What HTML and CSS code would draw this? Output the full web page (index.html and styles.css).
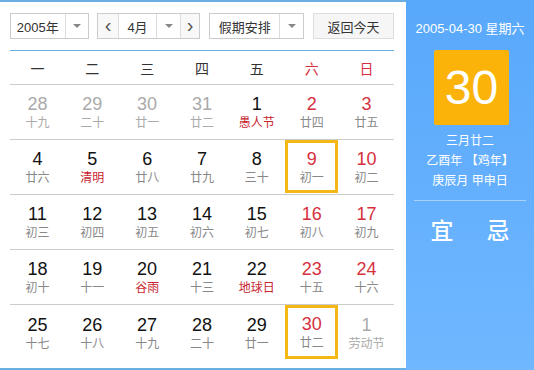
FILE: index.html
```html
<!DOCTYPE html>
<html lang="zh">
<head>
    <meta charset="UTF-8">
    <title>万年历</title>
    <link rel="stylesheet" href="styles.css">
</head>
<body>

<div class="calendar">
    <div class="main">
        <div class="toolbar">
            <div class="select year">
                <span class="label">2005年</span>
                <span class="arrow"><i></i></span>
            </div>
            <div class="select month">
                <span class="nav">&lsaquo;</span>
                <span class="label">4月</span>
                <span class="arrow"><i></i></span>
                <span class="nav next">&rsaquo;</span>
            </div>
            <div class="select holiday">
                <span class="label">假期安排</span>
                <span class="arrow"><i></i></span>
            </div>
            <div class="btn">返回今天</div>
        </div>

        <div class="weekdays">
            <span>一</span><span>二</span><span>三</span><span>四</span><span>五</span>
            <span class="weekend">六</span><span class="weekend">日</span>
        </div>

        <div class="days">
            <div class="week">
                <div class="day other"><b>28</b><small>十九</small></div>
                <div class="day other"><b>29</b><small>二十</small></div>
                <div class="day other"><b>30</b><small>廿一</small></div>
                <div class="day other"><b>31</b><small>廿二</small></div>
                <div class="day"><b>1</b><small class="fest">愚人节</small></div>
                <div class="day weekend"><b>2</b><small>廿四</small></div>
                <div class="day weekend"><b>3</b><small>廿五</small></div>
            </div>
            <div class="week">
                <div class="day"><b>4</b><small>廿六</small></div>
                <div class="day"><b>5</b><small class="fest">清明</small></div>
                <div class="day"><b>6</b><small>廿八</small></div>
                <div class="day"><b>7</b><small>廿九</small></div>
                <div class="day"><b>8</b><small>三十</small></div>
                <div class="day weekend mark"><b>9</b><small>初一</small></div>
                <div class="day weekend"><b>10</b><small>初二</small></div>
            </div>
            <div class="week">
                <div class="day"><b>11</b><small>初三</small></div>
                <div class="day"><b>12</b><small>初四</small></div>
                <div class="day"><b>13</b><small>初五</small></div>
                <div class="day"><b>14</b><small>初六</small></div>
                <div class="day"><b>15</b><small>初七</small></div>
                <div class="day weekend"><b>16</b><small>初八</small></div>
                <div class="day weekend"><b>17</b><small>初九</small></div>
            </div>
            <div class="week">
                <div class="day"><b>18</b><small>初十</small></div>
                <div class="day"><b>19</b><small>十一</small></div>
                <div class="day"><b>20</b><small class="fest">谷雨</small></div>
                <div class="day"><b>21</b><small>十三</small></div>
                <div class="day"><b>22</b><small class="fest">地球日</small></div>
                <div class="day weekend"><b>23</b><small>十五</small></div>
                <div class="day weekend"><b>24</b><small>十六</small></div>
            </div>
            <div class="week">
                <div class="day"><b>25</b><small>十七</small></div>
                <div class="day"><b>26</b><small>十八</small></div>
                <div class="day"><b>27</b><small>十九</small></div>
                <div class="day"><b>28</b><small>二十</small></div>
                <div class="day"><b>29</b><small>廿一</small></div>
                <div class="day weekend mark"><b>30</b><small>廿二</small></div>
                <div class="day other"><b>1</b><small>劳动节</small></div>
            </div>
        </div>
    </div>

    <div class="side">
        <div class="today">2005-04-30 星期六</div>
        <div class="bigday">30</div>
        <div class="lunar">
            三月廿二<br>
            乙酉年 【鸡年】<br>
            庚辰月 甲申日
        </div>
        <div class="yiji">
            <span>宜</span>
            <span>忌</span>
        </div>
    </div>
</div>

</body>
</html>
```

FILE: styles.css
```css
body {
  margin: 0;
  font-family: "Liberation Sans", "Noto Sans CJK SC", sans-serif;
  color: #333;
  background: #fff;
}
.calendar {
  display: flex;
  width: 534px;
  height: 370px;
}
.main {
  width: 406px;
  box-sizing: border-box;
  border-top: 2px solid #6aaee2;
  border-bottom: 2px solid #6aaee2;
  padding: 11px 12px 0 10px;
}
.toolbar {
  display: flex;
  height: 26px;
  font-size: 13px;
}
.select {
  display: flex;
  border: 1px solid #ccc;
  box-sizing: border-box;
  height: 26px;
  background: #fff;
}
.select .label {
  display: flex;
  align-items: center;
  justify-content: center;
}
.select .arrow {
  display: flex;
  align-items: center;
  justify-content: center;
  width: 23px;
  border-left: 1px solid #ddd;
}
.select .arrow i {
  width: 0;
  height: 0;
  border-left: 4px solid transparent;
  border-right: 4px solid transparent;
  border-top: 4px solid #888;
}
.year {
  width: 79px;
}
.year .label {
  width: 55px;
}
.month {
  width: 103px;
  margin-left: 8px;
}
.month .nav {
  display: flex;
  align-items: center;
  justify-content: center;
  width: 21px;
  background: #f8f8f8;
  border-right: 1px solid #ddd;
  color: #555;
  font-size: 20px;
  line-height: 1;
  padding-bottom: 3px;
  box-sizing: border-box;
}
.month .nav.next {
  border-right: 0;
  border-left: 1px solid #ddd;
  width: 19px;
}
.month .label {
  width: 37px;
}
.holiday {
  width: 95px;
  margin-left: 9px;
}
.holiday .label {
  width: 71px;
}
.btn {
  display: flex;
  align-items: center;
  justify-content: center;
  width: 81px;
  height: 26px;
  box-sizing: border-box;
  margin-left: 9px;
  border: 1px solid #ddd;
  background: #f6f6f6;
}
.weekdays {
  display: grid;
  grid-template-columns: repeat(7, 1fr);
  margin-top: 11px;
  border-top: 1px solid #6aaee2;
  border-bottom: 1px solid #ccc;
  height: 33px;
  align-items: center;
  text-align: center;
  font-size: 14px;
}
.weekend {
  color: #d6303e;
}
.week {
  display: grid;
  grid-template-columns: repeat(7, 1fr);
  height: 55px;
  border-bottom: 1px solid #ccc;
  box-sizing: border-box;
}
.week:last-child {
  border-bottom: 0;
}
.day {
  display: flex;
  flex-direction: column;
  align-items: center;
  justify-content: center;
  margin: 1px;
  border: 2px solid transparent;
}
.day b {
  font-weight: normal;
  font-size: 18px;
  line-height: 22px;
  color: #111;
}
.day.weekend b {
  color: #d6303e;
}
.day small {
  font-size: 12px;
  line-height: 16px;
  color: #888;
}
.day small.fest {
  color: #c8252e;
}
.day.other b,
.day.other small {
  color: #aaa;
}
.day.mark {
  border: 3px solid #f4b816;
  margin: 0 1px 1px 1px;
}
.side {
  flex: 1;
  background: linear-gradient(#58a8fb, #70b7ff);
  color: #fff;
  display: flex;
  flex-direction: column;
  align-items: center;
  padding: 0 8px;
}
.today {
  margin-top: 18px;
  font-size: 13px;
}
.bigday {
  margin-top: 13px;
  margin-left: 3px;
  width: 75px;
  height: 75px;
  background: #fbb30a;
  border-radius: 2px;
  display: flex;
  align-items: center;
  justify-content: center;
  font-size: 48px;
}
.lunar {
  margin-top: 6px;
  font-size: 12px;
  line-height: 20px;
  text-align: center;
}
.yiji {
  margin-top: 9px;
  border-top: 1px solid #a8d2fb;
  align-self: stretch;
  display: flex;
  justify-content: space-around;
  padding-top: 11px;
  font-size: 23px;
  font-weight: 500;
}
```
